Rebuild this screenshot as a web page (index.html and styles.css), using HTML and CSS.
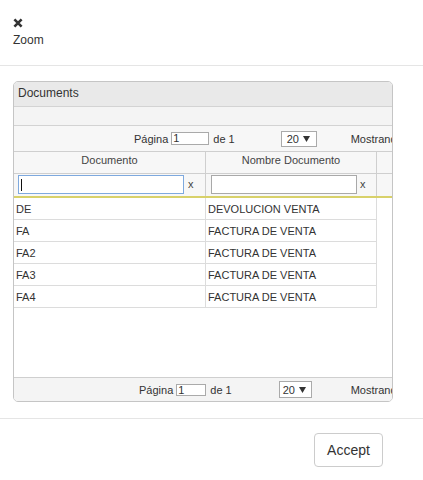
FILE: index.html
```html
<!DOCTYPE html>
<html>
<head>
<meta charset="utf-8">
<title>Zoom</title>
<link rel="stylesheet" href="styles.css">
</head>
<body>
<div class="modal">
  <div class="modal-header">
    <svg class="close" width="10" height="10" viewBox="0 0 10 10"><path d="M1.4 1.4 L8.6 8.6 M8.6 1.4 L1.4 8.6" stroke="#333" stroke-width="2.6" fill="none"/></svg>
    <div class="title">Zoom</div>
  </div>
  <div class="modal-body">
    <div class="grid">
      <div class="caption">Documents</div>
      <div class="toolbar"></div>
      <div class="pager pager-top">
        <span class="lbl">Página</span>
        <span class="pinput">1</span>
        <span class="of">de 1</span>
        <span class="psel">20 <svg width="7" height="6" viewBox="0 0 7 6"><polygon points="0,0 7,0 3.5,6" fill="#333"/></svg></span>
        <span class="info">Mostrando 1 - 5 de 5</span>
      </div>
      <div class="hrow">
        <div class="hcell c1">Documento</div>
        <div class="hcell c2">Nombre Documento</div>
        <div class="hcell c3"></div>
      </div>
      <div class="frow">
        <div class="fcell c1"><span class="finput f1 focused"></span><span class="clr">x</span></div>
        <div class="fcell c2"><span class="finput f2"></span><span class="clr">x</span></div>
        <div class="fcell c3"></div>
      </div>
      <div class="gbody">
        <div class="drow"><div class="dcell c1">DE</div><div class="dcell c2">DEVOLUCION VENTA</div></div>
        <div class="drow"><div class="dcell c1">FA</div><div class="dcell c2">FACTURA DE VENTA</div></div>
        <div class="drow"><div class="dcell c1">FA2</div><div class="dcell c2">FACTURA DE VENTA</div></div>
        <div class="drow"><div class="dcell c1">FA3</div><div class="dcell c2">FACTURA DE VENTA</div></div>
        <div class="drow"><div class="dcell c1">FA4</div><div class="dcell c2">FACTURA DE VENTA</div></div>
      </div>
      <div class="pager pager-bottom">
        <span class="lbl">Página</span>
        <span class="pinput">1</span>
        <span class="of">de 1</span>
        <span class="psel">20 <svg width="7" height="6" viewBox="0 0 7 6"><polygon points="0,0 7,0 3.5,6" fill="#333"/></svg></span>
        <span class="info">Mostrando 1 - 5 de 5</span>
      </div>
    </div>
  </div>
  <div class="modal-footer">
    <button class="btn">Accept</button>
  </div>
</div>
</body>
</html>
```
FILE: styles.css
```css
* { box-sizing: border-box; }
html, body { margin: 0; padding: 0; background: #fff; }
body {
  font-family: "Liberation Sans", Arial, Helvetica, sans-serif;
  color: #333;
  width: 423px;
  height: 480px;
  overflow: hidden;
}
.modal-header {
  height: 66px;
  padding: 18px 13px 0;
  border-bottom: 1px solid #e5e5e5;
}
.close { display: block; width: 10px; height: 10px; }
.title {
  margin-top: 4px;
  font-size: 12px;
  line-height: 16px;
}
.modal-body {
  padding: 15px 30px 16px 13px;
}
.grid {
  width: 380px;
  height: 321px;
  border: 1px solid #c5c5c5;
  border-radius: 5px;
  overflow: hidden;
  font-size: 11px;
  color: #333;
}
.caption {
  height: 24px;
  line-height: 22px;
  padding-left: 4px;
  font-size: 12px;
  background: #e9e9e9;
}
.toolbar {
  height: 20px;
  background: #f4f4f4;
  border-top: 1px solid #d3d3d3;
  border-bottom: 1px solid #d3d3d3;
}
.pager {
  display: flex;
  align-items: center;
  white-space: nowrap;
  overflow: hidden;
  background: #f7f7f7;
}
.pager-top {
  height: 26px;
  border-bottom: 1px solid #cfcfcf;
  padding-left: 120px;
}
.pager-bottom {
  height: 24px;
  border-top: 1px solid #cfcfcf;
  padding-left: 125px;
  background: #f4f4f4;
}
.lbl { flex: none; }
.pinput {
  flex: none;
  background: #fff;
  border: 1px solid #aaa;
  line-height: 11px;
  padding-left: 1px;
}
.pager-top .pinput { width: 38px; height: 13px; margin-left: 3px; }
.pager-bottom .pinput { width: 30px; height: 12px; margin-left: 3px; line-height: 10px; }
.of { flex: none; margin-left: 4px; }
.psel {
  flex: none;
  display: inline-flex;
  align-items: center;
  gap: 4px;
  background: #fff;
  border: 1px solid #aaa;
  padding-left: 5px;
}
.psel svg { display: block; }
.pager-top .psel { width: 36px; height: 16px; margin-left: 46px; }
.pager-bottom .psel { width: 33px; height: 17px; margin-left: 47px; padding-left: 3px; }
.info { flex: none; }
.pager-top .info { margin-left: 34px; }
.pager-bottom .info { margin-left: 39px; }

.hrow, .frow {
  display: flex;
  background: #f7f7f7;
}
.hrow { height: 22px; border-bottom: 1px solid #cfcfcf; }
.frow { height: 24px; border-bottom: 2px solid #d8d16a; }
.c1 { width: 192px; flex: none; border-right: 1px solid #cfcfcf; }
.c2 { width: 171px; flex: none; border-right: 1px solid #cfcfcf; }
.c3 { flex: 1; }
.hcell {
  text-align: center;
  line-height: 17px;
  color: #444;
}
.fcell {
  display: flex;
  align-items: flex-start;
  padding-top: 1px;
}
.fcell.c1 { padding-left: 4px; }
.fcell.c2 { padding-left: 5px; }
.finput {
  position: relative;
  display: block;
  height: 19px;
  background: #fff;
  border: 1px solid #a9a9a9;
}
.finput.f1 { width: 166px; }
.finput.f2 { width: 146px; }
.finput.focused { border-color: #7ea9de; }
.finput.focused::before {
  content: "";
  position: absolute;
  left: 2px;
  top: 3px;
  width: 1px;
  height: 12px;
  background: #111;
}
.clr {
  line-height: 19px;
  margin-left: 4px;
  color: #444;
}
.fcell.c2 .clr { margin-left: 3px; }
.gbody {
  height: 179px;
  background: #fff;
}
.drow {
  display: flex;
  width: 363px;
  height: 22px;
  border-bottom: 1px solid #dcdcdc;
}
.dcell {
  padding: 2px 0 0 2px;
  line-height: 19px;
  color: #333;
}
.drow .c1, .drow .c2 { border-right-color: #dcdcdc; }

.modal-footer {
  border-top: 1px solid #e5e5e5;
  padding: 14px 40px 13px 0;
  display: flex;
  justify-content: flex-end;
}
.btn {
  height: 34px;
  width: 69px;
  padding: 0;
  font-family: "Liberation Sans", Arial, Helvetica, sans-serif;
  font-size: 14px;
  color: #333;
  background: #fff;
  border: 1px solid #ccc;
  border-radius: 4px;
}
```
